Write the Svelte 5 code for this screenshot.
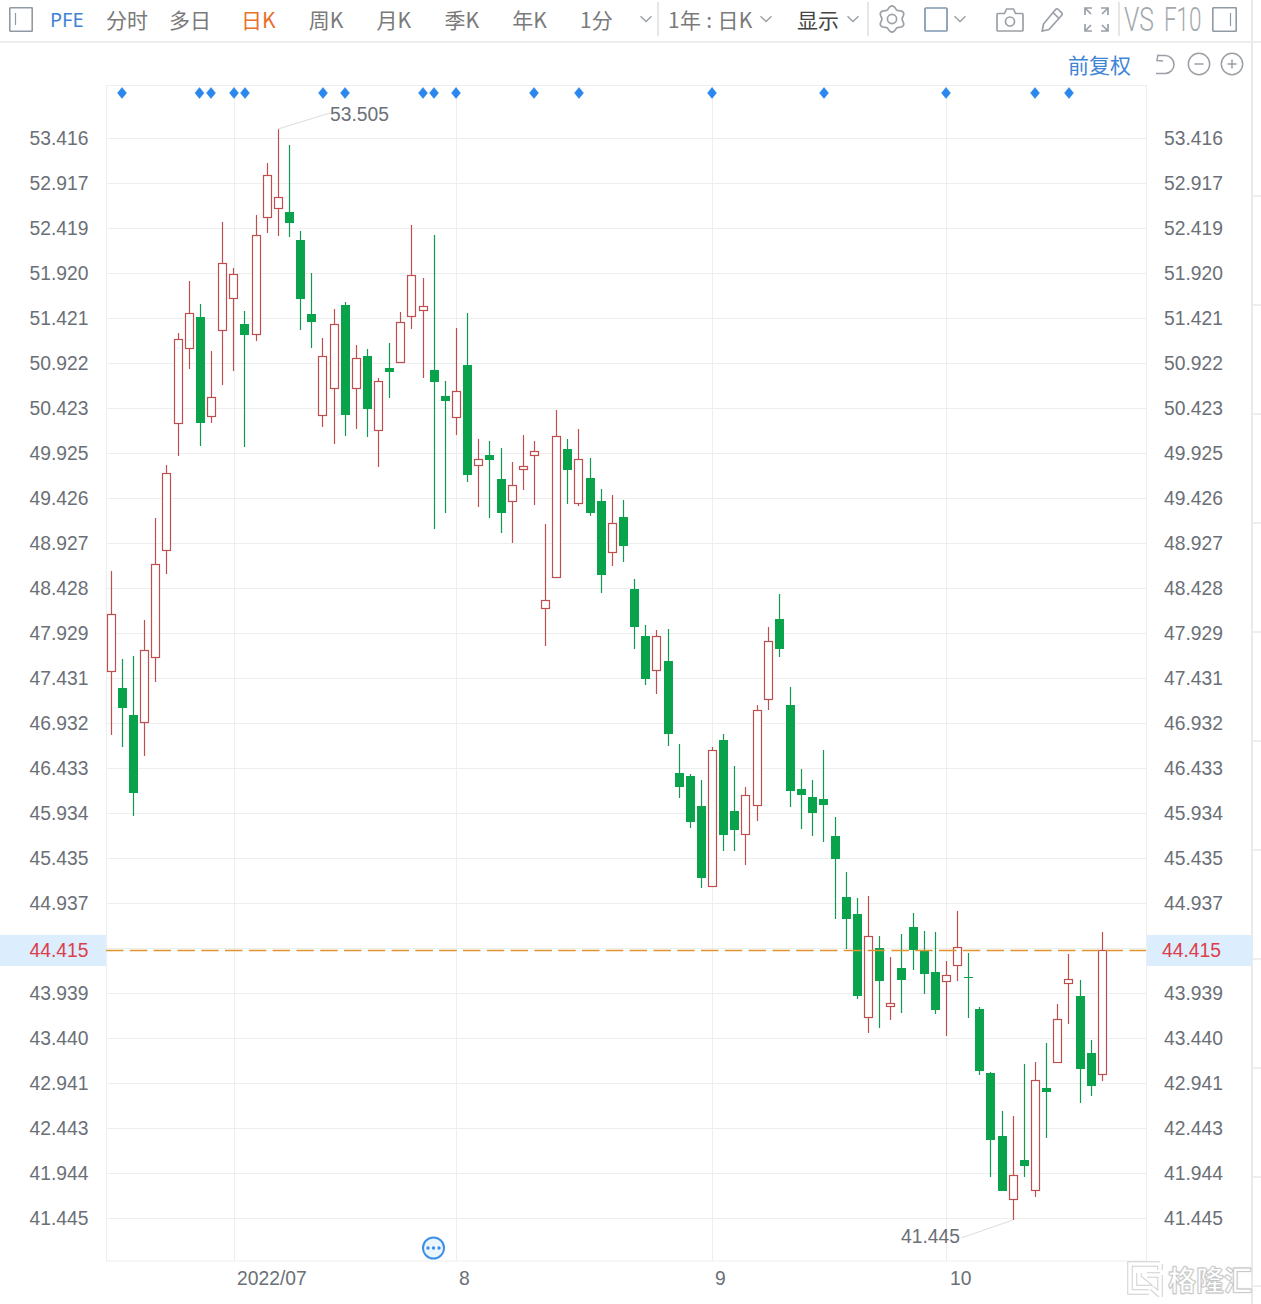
<script>
  const raw = `571 614 671 735 r,659 688 708 747 g,656 715 793 816 g,620 650 722 756 r,518 564 657 682 r,465 473 550 574 r,333 339 423 456 r,281 313 348 369 r,304 317 423 446 g,351 397 416 423 r,222 263 330 385 r,268 274 298 371 r,311 324 335 447 g,215 235 334 341 r,163 175 217 233 r,129 197 208 236 r,145 212 223 237 g,231 240 299 330 g,273 314 322 348 g,338 356 415 427 r,309 324 388 444 r,302 305 415 436 g,345 358 388 429 r,349 356 409 437 g,378 381 430 467 r,343 368 372 398 g,312 322 362 363 r,225 275 316 329 r,278 306 310 378 r,235 370 382 529 g,381 396 401 513 g,328 391 417 435 r,313 365 475 482 g,439 459 465 507 r,441 455 460 518 g,448 479 513 533 g,462 485 501 543 r,435 466 469 490 r,441 451 455 505 r,524 600 608 646 r,410 436 577 578 r,439 449 470 504 g,429 459 503 506 r,458 478 513 516 g,489 501 575 593 g,495 523 552 566 r,500 517 546 562 g,579 589 627 649 g,625 636 679 685 g,630 636 670 694 r,629 661 734 746 g,744 773 787 798 g,774 776 822 828 g,780 806 878 888 g,747 750 886 887 r,734 740 835 851 g,766 811 830 851 g,787 795 834 865 r,705 710 805 821 r,627 641 699 710 r,594 619 649 657 g,687 705 791 807 g,769 789 795 829 g,780 797 813 836 g,750 799 805 842 g,817 836 859 919 g,872 897 919 949 g,898 914 996 999 g,896 936 1017 1033 r,936 948 981 1028 g,957 1003 1006 1020 r,934 968 980 1013 g,913 927 950 970 g,931 951 974 994 g,932 972 1010 1014 g,961 975 981 1036 r,911 947 965 981 r,953 977 978 1018 g,1007 1009 1071 1075 g,1072 1073 1140 1177 g,1111 1136 1191 1191 g,1116 1175 1199 1220 r,1064 1160 1166 1177 g,1062 1080 1190 1197 r,1043 1088 1092 1138 g,1004 1019 1062 1062 r,954 979 983 1024 r,980 996 1069 1103 g,1040 1053 1086 1096 g,932 950 1074 1081 r`;
  const candles = raw.split(',').map((s, i) => {
    const [h, t, b, l, c] = s.split(' ');
    return { cx: Math.floor(111.3 + 11.135 * i) + 0.5, h: +h, t: +t, b: +b, l: +l, red: c === 'r' };
  });
  const prices = ['53.416','52.917','52.419','51.920','51.421','50.922','50.423','49.925','49.426','48.927','48.428','47.929','47.431','46.932','46.433','45.934','45.435','44.937',null,'43.939','43.440','42.941','42.443','41.944','41.445'];
  const rows = prices.map((p, k) => ({ p, y: 138 + 45 * k }));
  const vgrid = [234.5, 456.5, 712.5, 946.5];
  const xlabels = [['2022/07', 237], ['8', 459], ['9', 715], ['10', 950]];
  const marks = [122,199.5,211,234,245,323,345,423,434,456,534,579,712,824,946,1035,1069];
  const tabs = [['分时','w63'],['多日','w72'],['日K','wk on'],['周K','wk'],['月K','wk'],['季K','wk'],['年K','wk'],['1分','w59']];
  let gear = '';
  for (let i = 0; i <= 96; i++) {
    const a = (i / 96) * Math.PI * 2;
    const r = 11.6 + 1.5 * Math.cos(6 * a);
    gear += (i ? 'L' : 'M') + (14 + r * Math.sin(a)).toFixed(2) + ' ' + (14 - r * Math.cos(a)).toFixed(2);
  }
  gear += 'Z';
</script>

<div class="page">
  <div class="main">
    <header class="toolbar">
      <svg class="ic box first" viewBox="0 0 24 25"><rect x="0.75" y="0.75" width="22.5" height="23.5" rx="1"/><path d="M6.5 6v12"/></svg>
      <span class="sym">PFE</span>
      <nav class="tabs">
        {#each tabs as t}<span class="tab {t[1]}">{t[0]}</span>{/each}
      </nav>
      <svg class="chev" viewBox="0 0 14 8"><path d="M1.5 1.2 7 6.6l5.5-5.4"/></svg>
      <i class="div d1"></i>
      <span class="tab w85">1年 : 日K</span>
      <svg class="chev c2" viewBox="0 0 14 8"><path d="M1.5 1.2 7 6.6l5.5-5.4"/></svg>
      <span class="tab show">显示</span>
      <svg class="chev c3" viewBox="0 0 14 8"><path d="M1.5 1.2 7 6.6l5.5-5.4"/></svg>
      <i class="div d2"></i>
      <svg class="ic gear" viewBox="0 0 28 28"><path d={gear}/><circle cx="14" cy="14" r="4.6"/></svg>
      <svg class="ic sq" viewBox="0 0 24 25"><rect x="1" y="1" width="22" height="23" rx="1"/></svg>
      <svg class="chev c4" viewBox="0 0 14 8"><path d="M1.5 1.2 7 6.6l5.5-5.4"/></svg>
      <svg class="ic cam" viewBox="0 0 28 25"><path d="M1 7.5a1 1 0 0 1 1-1h6.5L10.5 2h7l2 4.500H26a1 1 0 0 1 1 1V23a1 1 0 0 1-1 1H2a1 1 0 0 1-1-1Z"/><circle cx="14" cy="14.500" r="4.500"/></svg>
      <svg class="ic pen" viewBox="0 0 24 25"><path d="M15.500 2.500a2 2 0 0 1 2.800 0l3.200 3.200a2 2 0 0 1 0 2.800L9 22.500l-6.800 1.500L3.500 17ZM13 5.500l6 6"/></svg>
      <svg class="ic full" viewBox="0 0 25 25"><path d="M1 8V1h7M1 1l6 6M17 1h7v7M24 1l-6 6M1 17v7h7M1 24l6-6M24 17v7h-7M24 24l-6-6"/></svg>
      <i class="div d3"></i>
      <span class="vs vs1"><span class="squeeze s1">VS</span></span>
      <span class="vs vs2"><span class="squeeze s2">F10</span></span>
      <svg class="ic box last" viewBox="0 0 25 25"><rect x="0.75" y="0.75" width="23.5" height="23.5" rx="1"/><path d="M18.500 6v13"/></svg>
    </header>

    <div class="subbar">
      <span class="adj">前复权</span>
      <svg class="ic undo" viewBox="0 0 22 22"><path d="M3 1.500l-1 6 6 .5M2.500 2.500H10a9 9 0 0 1 0 18H1"/></svg>
      <svg class="ic round" viewBox="0 0 24 24"><circle cx="12" cy="12" r="10.700"/><path d="M7.500 12h9"/></svg>
      <svg class="ic round r2" viewBox="0 0 24 24"><circle cx="12" cy="12" r="10.700"/><path d="M7.500 12h9M12 7.500v9"/></svg>
    </div>

    <svg class="chart" viewBox="0 85 1252 1219">
      <g class="grid">
        <path d="M106 85.500H1146.500M106.500 85V1261M1146.500 85V1261M106 1261H1146.500"/>
        {#each rows as r}<path d="M106 {r.y + 0.5}H1146"/>{/each}
        {#each vgrid as x}<path d="M{x} 85V1261"/>{/each}
      </g>

      <rect class="band" x="0" y="935" width="106" height="31"/>
      <rect class="band" x="1147" y="935" width="105" height="31"/>

      {#each marks as x}
        <path class="mark" d="M{x} 87.500 L{x + 4.500} 93 L{x} 98.500 L{x - 4.500} 93Z"/>
      {/each}

      {#each candles as c}
        {#if c.red}
          <path class="wick red" d="M{c.cx} {c.h}V{c.l}"/>
          <rect class="body red" x={c.cx - 4} y={c.t + 0.5} width="8" height={Math.max(c.b - c.t, 1)}/>
        {:else}
          <path class="wick green" d="M{c.cx} {c.h}V{c.l}"/>
          <rect class="body green" x={c.cx - 4.5} y={c.t} width="9" height={Math.max(c.b - c.t, 1)}/>
        {/if}
      {/each}

      <path class="last-line" d="M106 950.500H1146"/>

      <path class="lead" d="M278 129L330 113M1013 1220L961 1238"/>
      <text class="price" x="330" y="121">53.505</text>
      <text class="price" x="901" y="1243">41.445</text>

      {#each rows as r}
        {#if r.p}
          <text class="price" x="88.500" y={r.y + 7} text-anchor="end">{r.p}</text>
          <text class="price" x="1164" y={r.y + 7}>{r.p}</text>
        {/if}
      {/each}
      <text class="price now" x="88.500" y="957" text-anchor="end">44.415</text>
      <text class="price now" x="1162" y="957">44.415</text>

      {#each xlabels as l}
        <text class="price" x={l[1]} y="1285">{l[0]}</text>
      {/each}

      <g class="more">
        <circle cx="433.500" cy="1248" r="10.500"/>
        <circle class="dot" cx="428" cy="1248" r="1.700"/>
        <circle class="dot" cx="433.500" cy="1248" r="1.700"/>
        <circle class="dot" cx="439" cy="1248" r="1.700"/>
      </g>
    </svg>
  </div>
  <div class="side">
    <div class="side-top"></div>
    <div class="side-ticks"></div>
  </div>

  <div class="brand">
    <svg class="brand-logo" viewBox="0 0 36 36">
      <g class="lo"><path d="M33 3H3v28h19M33 3v6M33 14v20l-8-7M12 12v10h7l-6-5M20 14h13"/></g>
      <g class="li"><path d="M33 3H3v28h19M33 3v6M33 14v20l-8-7M12 12v10h7l-6-5M20 14h13"/></g>
    </svg>
    <span class="brand-text">格隆汇</span>
  </div>
</div>

<style>
  :global(body) { margin: 0; background: #fff; }
  .page {
    position: relative; display: flex; width: 1261px; height: 1304px; overflow: hidden;
    font-family: "Noto Sans CJK SC", "Liberation Sans", sans-serif; background: #fff;
  }
  .main { width: 1251px; flex: none; border-right: 2px solid #e9e9e9; display: flex; flex-direction: column; }
  .side { flex: 1; display: flex; flex-direction: column; }
  .side-top { height: 41px; border-bottom: 2px solid #eee; margin-bottom: 108px; }
  .side-ticks {
    flex: 1;
    background-image: linear-gradient(#eee 0 2px, transparent 2px);
    background-size: 100% 109px;
    background-position: 0 44px;
  }

  .toolbar { height: 38px; padding-bottom: 3px; flex: none; display: flex; align-items: center; border-bottom: 2px solid #eee; }
  .ic { flex: none; fill: none; stroke: #9aa0a6; stroke-width: 1.700; }
  .box { width: 24px; height: 25px; stroke: #8f9aa5; }
  .box path { stroke-width: 1.200; }
  .first { margin-left: 9px; }
  .sym { margin-left: 17px; width: 34px; font: 20px "Noto Sans", sans-serif; color: #3f84d6; }
  .tabs { display: flex; margin-left: 22px; }
  .tab { font-size: 21px; line-height: 28px; color: #7a7a7a; white-space: nowrap; flex: none; }
  .w63 { width: 63px; }
  .w72 { width: 72px; }
  .wk { width: 67.800px; }
  .w59 { width: 59px; }
  .on { color: #e8702a; }
  .w85 { width: 85px; margin-left: 9px; font-size: 21px; letter-spacing: 0.3px; }
  .show { width: 42px; margin-left: 24px; color: #444; }
  .chev { width: 14px; height: 8px; flex: none; fill: none; stroke: #9aa0a6; stroke-width: 1.400; }
  .c2 { margin-left: 6px; }
  .c3 { margin-left: 7px; }
  .c4 { margin-left: 5px; }
  .div { width: 2px; height: 34px; background: #e6e6e6; flex: none; }
  .d1 { margin-left: 4px; }
  .d2 { margin-left: 7px; }
  .d3 { margin-left: 9px; }
  .gear { width: 28px; height: 28px; margin-left: 9px; }
  .sq { width: 24px; height: 25px; margin-left: 18px; stroke: #7f97b0; }
  .cam { width: 28px; height: 25px; margin-left: 29px; }
  .pen { width: 24px; height: 25px; margin-left: 16px; }
  .full { width: 25px; height: 25px; margin-left: 20px; }
  .vs {
    flex: none; display: block; overflow: visible; white-space: nowrap;
    font: 300 33px/1 Roboto, "Liberation Sans", sans-serif; color: #a3a8ad;
  }
  .vs1 { width: 31px; margin-left: 4px; }
  .vs2 { width: 37px; margin-left: 9px; }
  .squeeze { display: inline-block; transform-origin: left center; }
  .s1 { transform: scaleX(0.75); }
  .s2 { transform: scaleX(0.68); }
  .last { width: 25px; height: 25px; margin-left: 11px; }

  .subbar { height: 42px; flex: none; display: flex; align-items: center; }
  .adj { margin-left: 1068px; width: 63px; font-size: 21px; color: #3f84d6; line-height: 28px; }
  .undo { width: 22px; height: 22px; margin-left: 24px; stroke-width: 1.500; }
  .round { width: 24px; height: 24px; margin-left: 10px; stroke-width: 1.500; }
  .r2 { margin-left: 9px; }

  .chart { width: 1252px; height: 1219px; flex: none; display: block; }
  .grid path { stroke: #eeeeee; stroke-width: 1; fill: none; }
  .band { fill: #dcedfd; }
  .mark { fill: #2b87ee; stroke: #2b87ee; stroke-width: 0.500; stroke-linejoin: round; }
  .wick { stroke-width: 1.200; fill: none; }
  .wick.red { stroke: #bf4f4f; }
  .wick.green { stroke: #0f9a50; }
  .body.red { fill: #fff; stroke: #bf4f4f; stroke-width: 1.200; }
  .body.green { fill: #09a34b; }
  .last-line { stroke: #e0932f; stroke-width: 1.300; stroke-dasharray: 17.500 6.300; fill: none; }
  .lead { stroke: #dcdcdc; stroke-width: 1; fill: none; }
  .price { font: 19.300px "Liberation Sans", Arial, sans-serif; fill: #6b7077; }
  .now { fill: #dc3f4a; }
  .more circle { fill: #edf5fc; stroke: #3c90e8; stroke-width: 2; }
  .more .dot { fill: #3c90e8; stroke: none; }

  .brand { position: absolute; left: 1127px; top: 1261px; display: flex; align-items: center; }
  .brand-logo { width: 36px; height: 36px; flex: none; }
  .lo path { fill: none; stroke: #cfcfcf; stroke-width: 5.500; }
  .li path { fill: none; stroke: #fff; stroke-width: 3.500; }
  .brand-text {
    margin-left: 5px; font-size: 28px; line-height: 36px; font-weight: 700; color: #fff;
    -webkit-text-stroke: 0.800px #c4c4c4; text-shadow: 0 0 2px #bbb; white-space: nowrap;
  }
</style>
